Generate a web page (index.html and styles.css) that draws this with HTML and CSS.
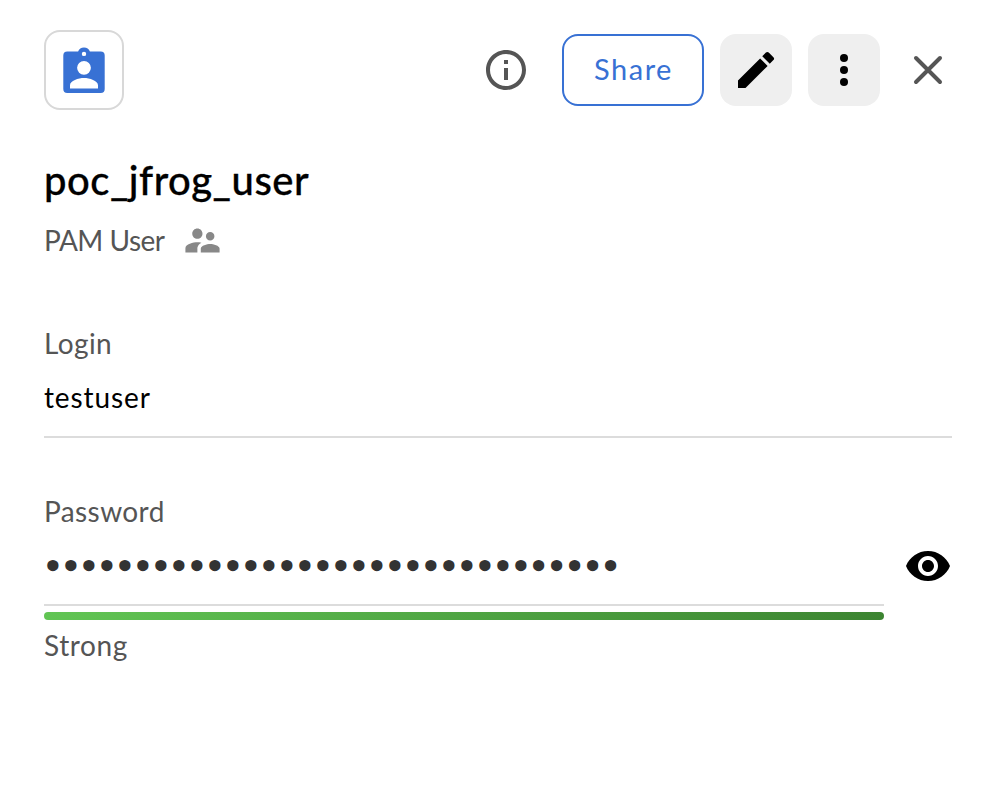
FILE: index.html
```html
<!DOCTYPE html>
<html lang="en">
<head>
<meta charset="utf-8">
<title>poc_jfrog_user</title>
<link rel="stylesheet" href="styles.css">
</head>
<body>
<main class="panel">
  <header class="toolbar">
    <div class="record-icon">
      <svg width="48" height="48" viewBox="0 0 48 48"><path fill="#3871d4" fill-rule="evenodd" d="M7.3 5.5h10.8a6.3 6.3 0 0 1 11.8 0h10.8a4 4 0 0 1 4 4v33.400a4 4 0 0 1-4 4H7.300a4 4 0 0 1-4-4V9.500a4 4 0 0 1 4-4zM24 5.700a2.200 2.200 0 1 0 0 4.400 2.200 2.200 0 0 0 0-4.400zM24 14.900a6.900 6.900 0 1 0 0 13.800 6.900 6.900 0 0 0 0-13.800zM10 42.500h28v-3.200c0-4.600-8.500-7.200-14-7.200s-14 2.600-14 7.200z"/></svg>
    </div>
    <div class="actions">
      <svg class="info" width="48" height="48" viewBox="0 0 24 24" fill="#555"><path d="M11 7h2v2h-2zm0 4h2v6h-2zm1-9C6.480 2 2 6.480 2 12s4.480 10 10 10 10-4.480 10-10S17.520 2 12 2zm0 18c-4.410 0-8-3.590-8-8s3.590-8 8-8 8 3.590 8 8-3.590 8-8 8z"/></svg>
      <button class="share"><span>Share</span></button>
      <button class="tool" aria-label="Edit"><svg width="48" height="48" viewBox="0 0 24 24"><path d="M3 17.250V21h3.750L17.810 9.940l-3.750-3.750L3 17.250zM20.710 7.040a1 1 0 0 0 0-1.410l-2.340-2.340a1 1 0 0 0-1.410 0l-1.830 1.830 3.750 3.750 1.830-1.830z"/></svg></button>
      <button class="tool" aria-label="More"><svg width="48" height="48" viewBox="0 0 24 24"><circle cx="12" cy="6" r="2"/><circle cx="12" cy="12" r="2"/><circle cx="12" cy="18" r="2"/></svg></button>
      <button class="close" aria-label="Close"><svg width="48" height="48" viewBox="0 0 48 48"><path d="M12 12l24 24M36 12L12 36" stroke="#555" stroke-width="4" stroke-linecap="round"/></svg></button>
    </div>
  </header>
  <h1>poc_jfrog_user</h1>
  <div class="kind">
    <span class="kind-name">PAM User</span>
    <svg width="41" height="41" viewBox="0 0 24 24" fill="#888"><path d="M16.500 12c1.380 0 2.490-1.120 2.490-2.500S17.880 7 16.500 7 14 8.120 14 9.500s1.120 2.500 2.500 2.500zM9 11c1.660 0 2.990-1.340 2.990-3S10.660 5 9 5 6 6.340 6 8s1.340 3 3 3zm7.500 3c-1.830 0-5.500.920-5.500 2.750V19h11v-2.250c0-1.830-3.670-2.750-5.500-2.750zM9 13c-2.330 0-7 1.170-7 3.500V19h7v-2.250c0-.850.330-2.340 2.370-3.470C10.500 13.100 9.660 13 9 13z"/></svg>
  </div>
  <section class="field login">
    <div class="label">Login</div>
    <div class="value">testuser</div>
  </section>
  <section class="field password">
    <div class="secret">
      <div class="label">Password</div>
      <div class="dots">••••••••••••••••••••••••••••••••</div>
      <div class="strength"></div>
      <div class="label rating">Strong</div>
    </div>
    <button class="reveal" aria-label="Show password"><svg width="48" height="48" viewBox="0 0 24 24"><path d="M12 4.500C7 4.500 2.730 7.610 1 12c1.730 4.390 6 7.500 11 7.500s9.270-3.110 11-7.500c-1.730-4.390-6-7.500-11-7.500zM12 17c-2.760 0-5-2.240-5-5s2.240-5 5-5 5 2.240 5 5-2.240 5-5 5zm0-8c-1.660 0-3 1.340-3 3s1.340 3 3 3 3-1.340 3-3-1.340-3-3-3z"/></svg></button>
  </section>
</main>
</body>
</html>
```
FILE: styles.css
```css
* { box-sizing: border-box; }
body { margin: 0; background: #fff; color: #000; font: 28px/36px Lato, sans-serif; }
button { margin: 0; padding: 0; border: 0; background: none; font: inherit; display: flex; align-items: center; justify-content: center; }
svg { display: block; flex: none; }
.panel { width: 996px; height: 800px; padding: 30px 44px; overflow: hidden; }
.toolbar { display: flex; justify-content: space-between; align-items: center; height: 80px; }
.record-icon { width: 80px; height: 80px; border: 2px solid #d8d8d8; border-radius: 16px; display: flex; align-items: center; justify-content: center; }
.actions { display: flex; align-items: center; gap: 16px; }
.info { margin-right: 16px; }
.share { width: 142px; height: 72px; padding: 0 0 2px 1px; border: 2px solid #3871d4; border-radius: 16px; color: #3871d4; font-size: 29px; letter-spacing: 1.5px; }
.tool { width: 72px; height: 72px; border-radius: 16px; background: #efefef; }
.close { width: 48px; height: 48px; margin-left: 8px; }
h1 { margin: 45px 0 0; height: 50px; font-size: 40px; line-height: 50px; font-weight: 500; letter-spacing: 0.5px; -webkit-text-stroke: 0.3px #000; }
.kind { display: flex; align-items: center; height: 41px; margin-top: 15px; color: #555; }
.kind-name { width: 137.5px; padding-bottom: 2px; letter-spacing: -0.5px; }
.label { height: 36px; color: #555; letter-spacing: 0.4px; }
.login { margin-top: 64px; height: 113px; border-bottom: 2px solid #dcdcdc; }
.value { margin-top: 18px; letter-spacing: 0.9px; }
.password { display: flex; justify-content: space-between; margin-top: 55px; }
.secret { width: 840px; }
.dots { height: 77px; border-bottom: 2px solid #dcdcdc; font: 30px/76px "DejaVu Sans", sans-serif; letter-spacing: 0.3px; color: #333; -webkit-text-stroke: 2.5px #333; white-space: nowrap; }
.strength { height: 8px; margin-top: 6px; border-radius: 4px; background: linear-gradient(120deg, #61c554, #3c8431); }
.rating { margin-top: 7px; letter-spacing: 0.6px; }
.reveal { width: 48px; height: 48px; margin: 49px 0 0; }
```
